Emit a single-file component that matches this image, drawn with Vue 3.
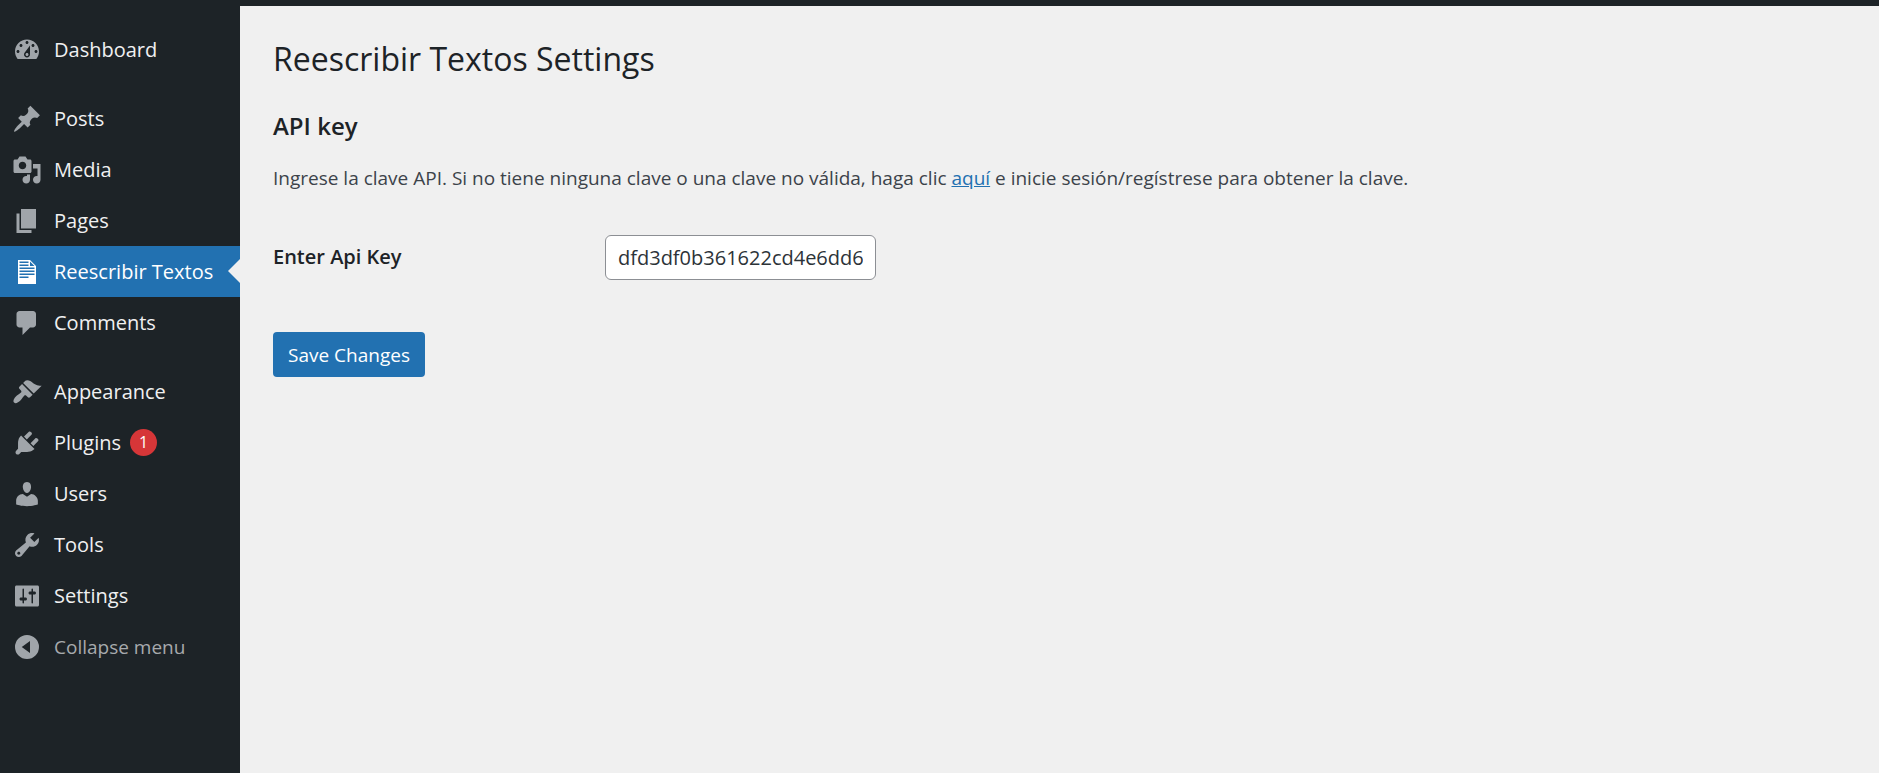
<script setup>
import { ref } from 'vue'

const groups = [
  [
    { label: 'Dashboard', d: 'M3.76 16h12.48c1.1-1.37 1.76-3.11 1.76-5 0-4.42-3.58-8-8-8s-8 3.58-8 8c0 1.89.66 3.63 1.76 5zM10 4c.55 0 1 .45 1 1s-.45 1-1 1-1-.45-1-1 .45-1 1-1zM6 6c.55 0 1 .45 1 1s-.45 1-1 1-1-.45-1-1 .45-1 1-1zm8 0c.55 0 1 .45 1 1s-.45 1-1 1-1-.45-1-1 .45-1 1-1zm-5.37 5.55L12 7v6c0 1.1-.9 2-2 2s-2-.9-2-2c0-.57.24-1.08.63-1.45zM4 10c.55 0 1 .45 1 1s-.45 1-1 1-1-.45-1-1 .45-1 1-1zm12 0c.55 0 1 .45 1 1s-.45 1-1 1-1-.45-1-1 .45-1 1-1zm-5 3c0-.55-.45-1-1-1s-1 .45-1 1 .45 1 1 1 1-.45 1-1z' },
  ],
  [
    { label: 'Posts', d: 'M10.44 3.02l1.82-1.82 6.36 6.35-1.83 1.82c-1.05-.68-2.48-.57-3.41.36l-.75.75c-.92.93-1.04 2.35-.35 3.41l-1.83 1.82-2.41-2.41-2.8 2.79c-.42.42-3.38 2.71-3.8 2.29s1.86-3.39 2.28-3.81l2.79-2.79L4.1 9.36l1.83-1.82c1.05.69 2.48.57 3.4-.36l.75-.75c.93-.92 1.05-2.35.36-3.41z' },
    { label: 'Media', d: 'M13 11V4c0-.55-.45-1-1-1h-1.67L9 1H5L3.67 3H2c-.55 0-1 .45-1 1v7c0 .55.45 1 1 1h10c.55 0 1-.45 1-1zM7 4.5c1.38 0 2.5 1.12 2.5 2.5S8.38 9.5 7 9.5 4.5 8.38 4.5 7 5.62 4.5 7 4.5zM14 6h5v10.5c0 1.38-1.12 2.5-2.5 2.5S14 17.88 14 16.5s1.12-2.5 2.5-2.5c.17 0 .34.02.5.05V9h-3V6zm-4 8.05V13h2v3.5c0 1.38-1.12 2.5-2.5 2.5S7 17.88 7 16.5 8.12 14 9.5 14c.17 0 .34.02.5.05z' },
    { label: 'Pages', d: 'M6 15V2h10v13H6zm-1 1h8v2H3V5h2v11z' },
    { label: 'Reescribir Textos', current: true, d: 'M12 2l4 4v12H4V2h8zM5 3v1h6V3H5zm7 3h3l-3-3v3zM5 5v1h6V5H5zm10 3V7H5v1h10zm0 2V9H5v1h10zm0 2v-1H5v1h10zm-4 2v-1H5v1h6z' },
    { label: 'Comments', d: 'M5 2h9c1.1 0 2 .9 2 2v7c0 1.1-.9 2-2 2h-2l-5 5v-5H5c-1.1 0-2-.9-2-2V4c0-1.1.9-2 2-2z' },
  ],
  [
    { label: 'Appearance', d: 'M14.48 11.06L7.41 3.99l1.5-1.5c.5-.56 2.3-.47 3.51.32 1.21.8 1.43 1.28 2.91 2.1 1.18.64 2.45 1.26 4.45.85zm-.71.71L6.7 4.7 4.93 6.47c-.39.39-.39 1.02 0 1.41l1.06 1.06c.39.39.39 1.03 0 1.42-.6.6-1.43 1.11-2.21 1.69-.35.26-.7.53-1.01.84C1.43 14.23.4 16.08 1.4 17.07c.99 1 2.84-.03 4.18-1.36.31-.31.58-.66.85-1.02.57-.78 1.08-1.61 1.69-2.21.39-.39 1.02-.39 1.41 0l1.06 1.06c.39.39 1.02.39 1.41 0z' },
    { label: 'Plugins', badge: 1, d: 'M13.11 4.36L9.87 7.6 8 5.73l3.24-3.24c.35-.34 1.05-.2 1.56.32.52.51.66 1.21.31 1.55zm-8 1.77l.91-1.12 9.01 9.01-1.19.84c-.71.71-2.63 1.16-3.82 1.16H6.14L4.9 17.26c-.59.59-1.54.59-2.12 0-.59-.58-.59-1.53 0-2.12l1.24-1.24v-3.88c0-1.13.4-3.19 1.09-3.89zm7.26 3.97l3.24-3.24c.34-.35 1.04-.21 1.55.31.52.51.66 1.21.31 1.55l-3.24 3.25z' },
    { label: 'Users', d: 'M10 9.25c-2.27 0-2.73-3.44-2.73-3.44C7 4.02 7.82 2 9.97 2c2.16 0 2.98 2.02 2.71 3.81 0 0-.41 3.44-2.68 3.44zm0 2.57L12.72 10c2.39 0 4.52 2.33 4.52 4.53v2.49s-3.65 1.13-7.24 1.13c-3.65 0-7.24-1.13-7.24-1.13v-2.49c0-2.25 1.94-4.48 4.47-4.48z' },
    { label: 'Tools', d: 'M16.68 9.77c-1.34 1.34-3.3 1.67-4.95.99l-5.41 6.52c-.99.99-2.59.99-3.58 0s-.99-2.59 0-3.57l6.52-5.42c-.68-1.65-.35-3.61.99-4.95 1.28-1.28 3.12-1.62 4.72-1.06l-2.89 2.89 2.82 2.82 2.86-2.87c.53 1.58.18 3.39-1.08 4.65zM3.81 16.21c.4.39 1.04.39 1.43 0 .4-.4.4-1.04 0-1.43-.39-.4-1.03-.4-1.43 0-.39.39-.39 1.03 0 1.43z' },
    { label: 'Settings', d: 'M18 16V4c0-.55-.45-1-1-1H3c-.55 0-1 .45-1 1v12c0 .55.45 1 1 1h14c.55 0 1-.45 1-1zM8 11h1c.55 0 1 .45 1 1s-.45 1-1 1H8v1.5c0 .28-.22.5-.5.5s-.5-.22-.5-.5V13H6c-.55 0-1-.45-1-1s.45-1 1-1h1V5.5c0-.28.22-.5.5-.5s.5.22.5.5V11zm5-2h-1c-.55 0-1-.45-1-1s.45-1 1-1h1V5.5c0-.28.22-.5.5-.5s.5.22.5.5V7h1c.55 0 1 .45 1 1s-.45 1-1 1h-1v5.5c0 .28-.22.5-.5.5s-.5-.22-.5-.5V9z' },
  ],
]

const apiKey = ref('dfd3df0b361622cd4e6dd6')
</script>

<template>
  <div class="admin">
    <div class="adminbar"></div>
    <div class="body">
      <nav class="sidebar">
        <ul v-for="(group, i) in groups" :key="i" class="group">
          <li v-for="item in group" :key="item.label">
            <a href="#" class="item" :class="{ current: item.current }">
              <svg class="icon" viewBox="0 0 20 20" aria-hidden="true">
                <path :d="item.d" fill="currentColor" fill-rule="evenodd" />
              </svg>
              <span>{{ item.label }}</span>
              <span v-if="item.badge" class="badge">{{ item.badge }}</span>
            </a>
          </li>
        </ul>
        <button type="button" class="item collapse">
          <svg class="icon" viewBox="0 0 20 20" aria-hidden="true">
            <path d="M10 2a8 8 0 1 0 0 16 8 8 0 0 0 0-16zM12 6v8l-5.500-4z" fill="currentColor" fill-rule="evenodd" />
          </svg>
          <span>Collapse menu</span>
        </button>
      </nav>

      <main class="content">
        <h1>Reescribir Textos Settings</h1>
        <h2>API key</h2>
        <p>
          Ingrese la clave API. Si no tiene ninguna clave o una clave no válida, haga clic
          <a href="#">aquí</a> e inicie sesión/regístrese para obtener la clave.
        </p>
        <form @submit.prevent>
          <div class="field">
            <label for="api-key">Enter Api Key</label>
            <input id="api-key" v-model="apiKey" type="text" />
          </div>
          <button type="submit" class="save">Save Changes</button>
        </form>
      </main>
    </div>
  </div>
</template>

<style>
body {
  margin: 0;
  background: #f0f0f0;
}
</style>

<style scoped>
.admin {
  display: flex;
  flex-direction: column;
  min-height: 100vh;
  font-family: "Open Sans", "Noto Sans", sans-serif;
  font-size: 20px;
  color: #3c434a;
}
.adminbar {
  height: 6px;
  background: #1d2327;
}
.body {
  display: flex;
  flex: 1;
}
.sidebar {
  flex: none;
  width: 240px;
  box-sizing: border-box;
  padding: 18px 0;
  background: #1d2327;
}
.group {
  list-style: none;
  margin: 0;
  padding: 0;
}
.group + .group {
  margin-top: 18px;
}
.item {
  position: relative;
  display: flex;
  align-items: center;
  width: 100%;
  height: 51px;
  box-sizing: border-box;
  padding: 0 12px;
  font-size: 20px;
  line-height: 28px;
  color: #f0f0f1;
  text-decoration: none;
  white-space: nowrap;
}
.icon {
  flex: none;
  width: 30px;
  height: 30px;
  margin-right: 12px;
  color: #a0a5aa;
}
.current {
  background: #2271b1;
  color: #fff;
}
.current .icon {
  color: #fff;
}
.current::after {
  content: "";
  position: absolute;
  right: 0;
  top: 13px;
  border: 12px solid transparent;
  border-left-width: 0;
  border-right-color: #f0f0f0;
}
.badge {
  width: 27px;
  height: 27px;
  margin-left: 9px;
  border-radius: 50%;
  background: #d63638;
  color: #fff;
  font-size: 16px;
  line-height: 27px;
  text-align: center;
}
.collapse {
  border: 0;
  background: none;
  font-family: inherit;
  font-size: 19px;
  color: #a7aaad;
  cursor: pointer;
}
.content {
  flex: 1;
  min-width: 0;
  padding: 30px 33px;
}
h1 {
  margin: 0;
  font-size: 32px;
  font-weight: 400;
  line-height: 45px;
  color: #1d2327;
}
h2 {
  margin: 30px 0 24px;
  font-size: 24px;
  font-weight: 600;
  line-height: 30px;
  color: #1d2327;
}
p {
  margin: 0;
  font-size: 19px;
  line-height: 27px;
}
p a {
  color: #2271b1;
}
.field {
  display: flex;
  align-items: flex-start;
  margin: 43px 0 52px;
}
label {
  flex: none;
  width: 332px;
  font-size: 20px;
  font-weight: 600;
  line-height: 44px;
  color: #1d2327;
}
input {
  width: 271px;
  height: 45px;
  box-sizing: border-box;
  padding: 0 12px;
  border: 1px solid #8c8f94;
  border-radius: 6px;
  background: #fff;
  font-family: inherit;
  font-size: 20px;
  color: #2c3338;
}
.save {
  height: 45px;
  padding: 0 15px;
  border: 0;
  border-radius: 4px;
  background: #2271b1;
  font-family: inherit;
  font-size: 19px;
  color: #fff;
  cursor: pointer;
}
</style>
